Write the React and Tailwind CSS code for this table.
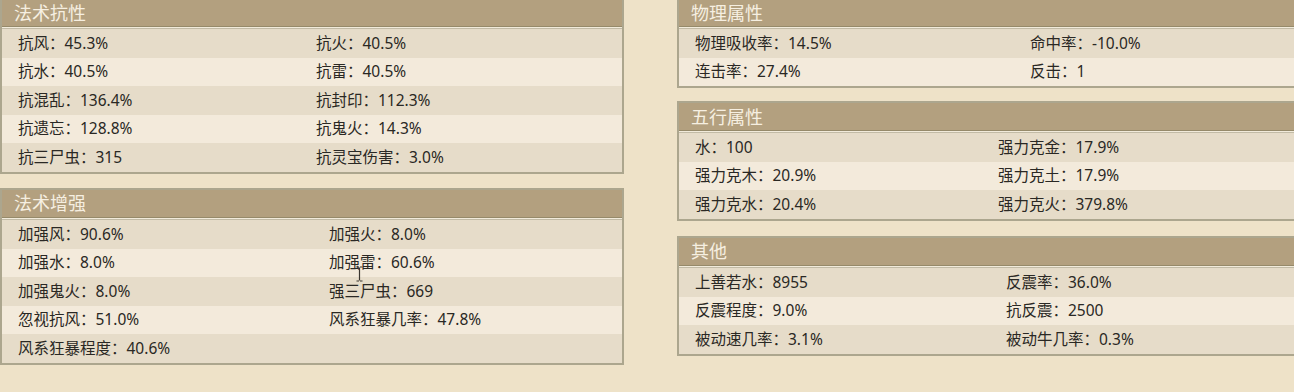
import React from "react";

const Panel = ({ title, rows, cols, cls = "" }) => (
  <div className={`border-2 border-[#aca68e] bg-[#f2ebdb] ${cls}`}>
    <div className="h-[28px] bg-[#b3a07f] border-b border-[#968a6a] pl-3 flex items-center text-[18px] text-[#f6efe1] leading-none">
      {title}
    </div>
    <div className="mt-px border-t border-[#c2bba6]">
      {rows.map((r, i) => (
        <div
          key={i}
          className={`grid h-[28.6px] items-center ${cols} ${
            i % 2 === 0 ? "bg-[#e6dcc9]" : "bg-[#f3eadb]"
          }`}
        >
          <div className="pl-4 whitespace-nowrap">{r[0]}</div>
          <div className="pl-4 whitespace-nowrap">{r[1] || ""}</div>
        </div>
      ))}
    </div>
  </div>
);

export default function App() {
  return (
    <div className="relative flex w-[1294px] h-[392px] overflow-hidden bg-[#eee2c8] font-['Noto_Sans','Noto_Sans_CJK_SC',sans-serif] text-[15.5px] text-[#2a2824]">
      <div className="w-[624px] shrink-0 flex flex-col -mt-[3px]">
        <Panel
          title="法术抗性"
          cols="grid-cols-[298px_1fr]"
          rows={[
            ["抗风：45.3%", "抗火：40.5%"],
            ["抗水：40.5%", "抗雷：40.5%"],
            ["抗混乱：136.4%", "抗封印：112.3%"],
            ["抗遗忘：128.8%", "抗鬼火：14.3%"],
            ["抗三尸虫：315", "抗灵宝伤害：3.0%"],
          ]}
        />
        <Panel
          title="法术增强"
          cls="mt-[14px]"
          cols="grid-cols-[311px_1fr]"
          rows={[
            ["加强风：90.6%", "加强火：8.0%"],
            ["加强水：8.0%", "加强雷：60.6%"],
            ["加强鬼火：8.0%", "强三尸虫：669"],
            ["忽视抗风：51.0%", "风系狂暴几率：47.8%"],
            ["风系狂暴程度：40.6%", ""],
          ]}
        />
      </div>
      <div className="ml-[53px] w-[660px] shrink-0 flex flex-col -mt-[3px]">
        <Panel
          title="物理属性"
          cols="grid-cols-[335px_1fr]"
          rows={[
            ["物理吸收率：14.5%", "命中率：-10.0%"],
            ["连击率：27.4%", "反击：1"],
          ]}
        />
        <Panel
          title="五行属性"
          cls="mt-[13px]"
          cols="grid-cols-[303px_1fr]"
          rows={[
            ["水：100", "强力克金：17.9%"],
            ["强力克木：20.9%", "强力克土：17.9%"],
            ["强力克水：20.4%", "强力克火：379.8%"],
          ]}
        />
        <Panel
          title="其他"
          cls="mt-[15px]"
          cols="grid-cols-[311px_1fr]"
          rows={[
            ["上善若水：8955", "反震率：36.0%"],
            ["反震程度：9.0%", "抗反震：2500"],
            ["被动速几率：3.1%", "被动牛几率：0.3%"],
          ]}
        />
      </div>
      <svg
        className="absolute left-[355px] top-[266px]"
        width="9"
        height="16"
        viewBox="0 0 9 16"
      >
        <path
          d="M1.5 1h2.5M5 1h2.5M4.5 1.5v13M1.5 15h2.5M5 15h2.5"
          stroke="#3a3630"
          strokeWidth="1.2"
          fill="none"
        />
      </svg>
    </div>
  );
}
